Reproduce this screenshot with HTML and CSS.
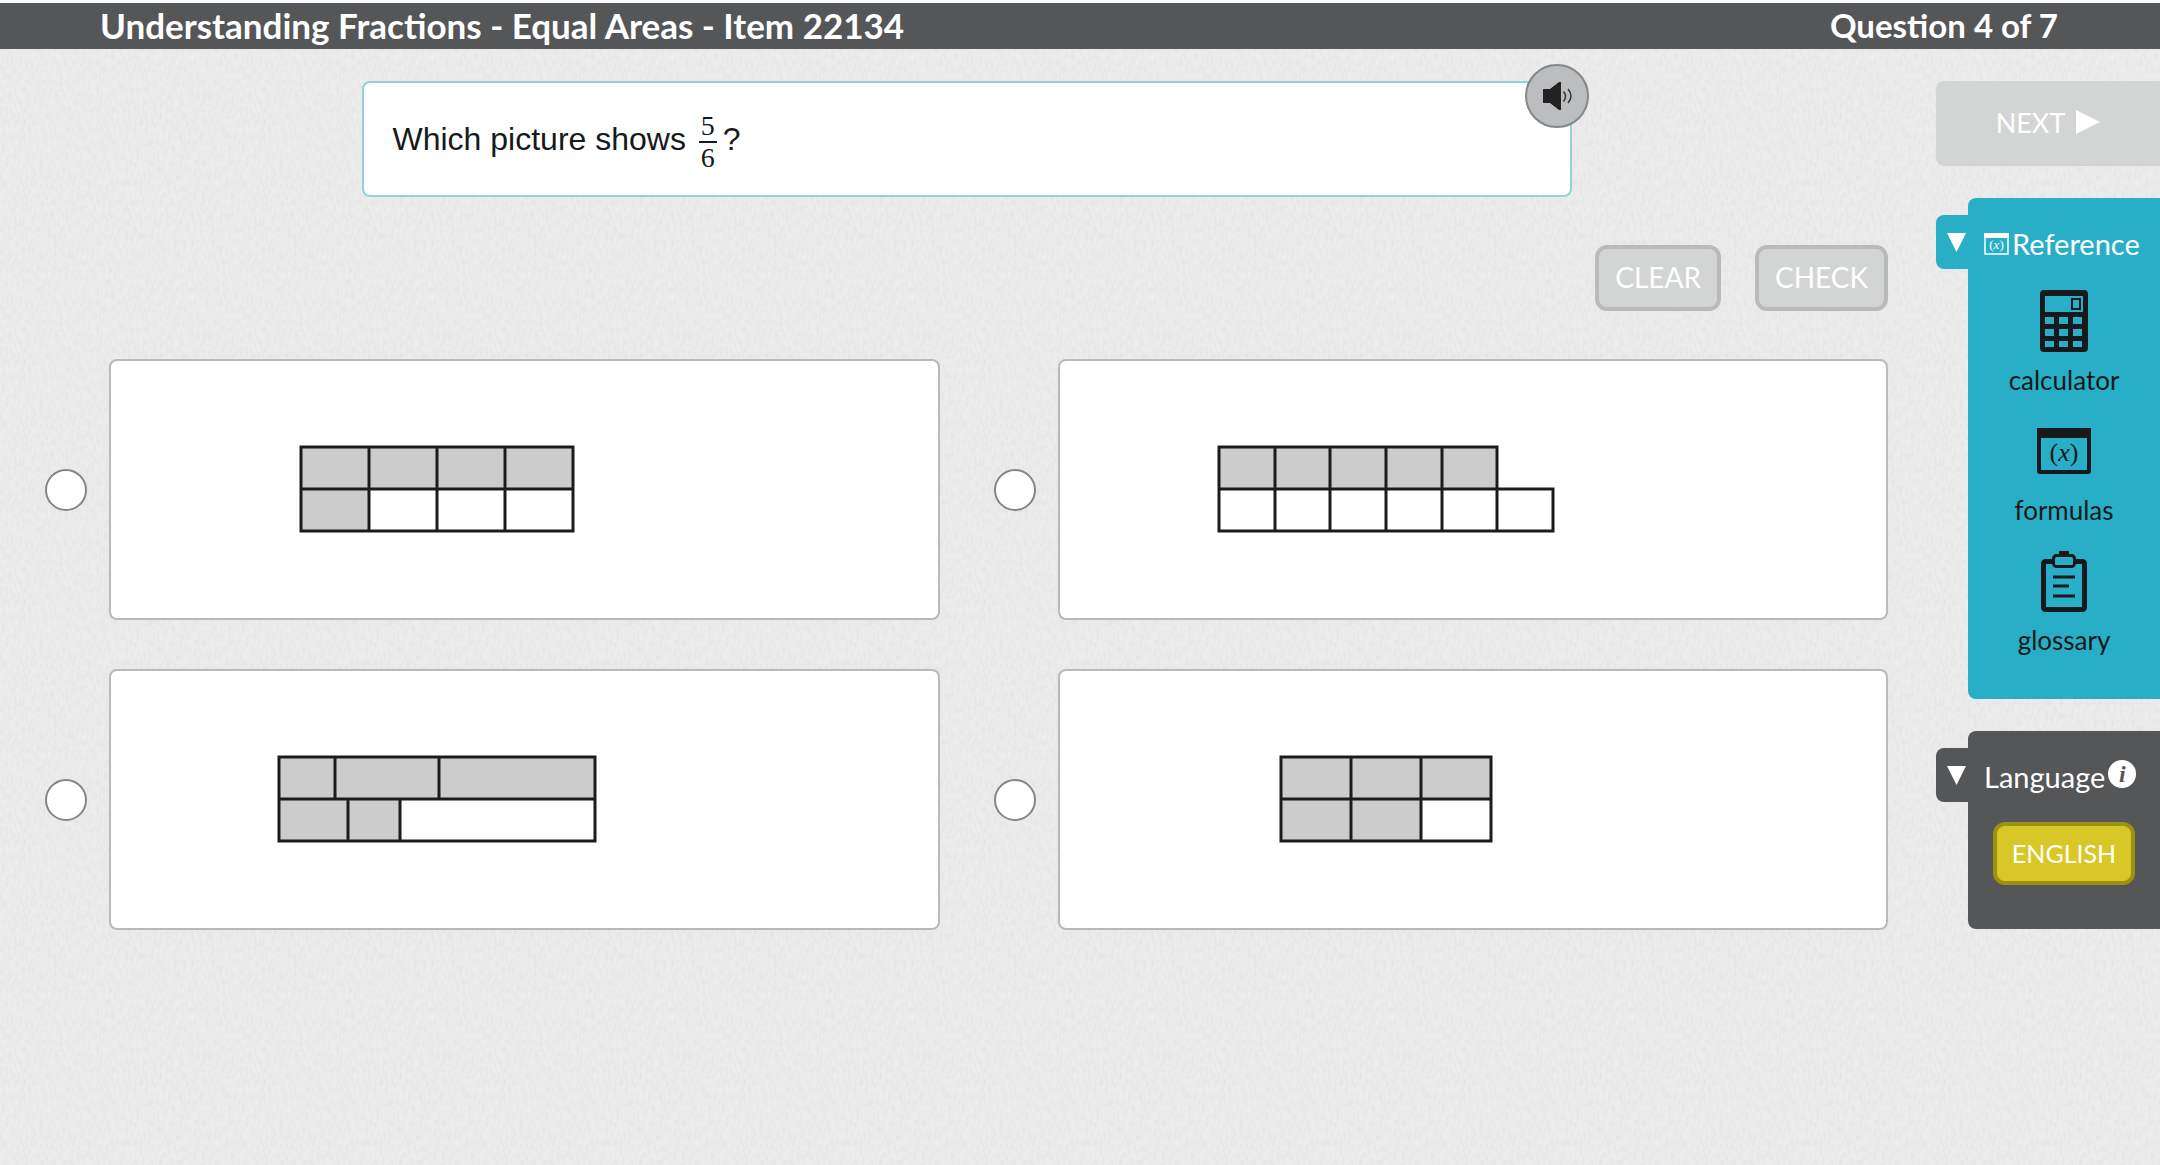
FILE: index.html
```html
<!DOCTYPE html>
<html lang="en">
<head>
<meta charset="utf-8">
<title>Understanding Fractions - Equal Areas</title>
<link rel="stylesheet" href="styles.css">
</head>
<body>

<header class="topbar">
  <h1>Understanding Fractions - Equal Areas - Item 22134</h1>
  <span class="progress">Question 4 of 7</span>
</header>

<div class="layout">

  <main>
    <form id="itemForm">

      <section class="question">
        <p>Which picture shows <span class="fraction"><span class="num">5</span><span class="den">6</span></span>?</p>
        <button type="button" class="audio" aria-label="Read aloud">
          <svg width="30" height="28" viewBox="0 0 30 28">
            <path d="M0 7h7L16 0h2v28h-2L7 21H0z" fill="#222"/>
            <path d="M20.500 9.500q4 4.500 0 10M25 7q6 7 0 14" fill="none" stroke="#333" stroke-width="1.500"/>
          </svg>
        </button>
      </section>

      <div class="actions">
        <button type="reset" class="btn" disabled>CLEAR</button>
        <button type="submit" class="btn" disabled>CHECK</button>
      </div>

      <div class="options">

        <label class="option">
          <input type="radio" name="answer" value="a">
          <span class="card">
            <svg class="figure" width="276" height="88" role="img" aria-label="Two rows of four parts">
              <path class="shaded" d="M2 2H274V44H70V86H2z"/>
              <path class="lines" d="M2 2H274V86H2zM2 44H274M70 2V86M138 2V86M206 2V86"/>
            </svg>
          </span>
        </label>

        <label class="option">
          <input type="radio" name="answer" value="b">
          <span class="card">
            <svg class="figure" width="338" height="88" role="img" aria-label="A row of five parts above a row of six parts">
              <path class="shaded" d="M2 2H280V44H2z"/>
              <path class="lines" d="M2 44V2H280V86M2 44V86H336V44zM58 2V86M113 2V86M169 2V86M225 2V86"/>
            </svg>
          </span>
        </label>

        <label class="option">
          <input type="radio" name="answer" value="c">
          <span class="card">
            <svg class="figure" width="320" height="88" role="img" aria-label="Six parts of different sizes">
              <path class="shaded" d="M2 2H318V44H123V86H2z"/>
              <path class="lines" d="M2 2H318V86H2zM2 44H318M58 2V44M162 2V44M71 44V86M123 44V86"/>
            </svg>
          </span>
        </label>

        <label class="option">
          <input type="radio" name="answer" value="d">
          <span class="card">
            <svg class="figure" width="214" height="88" role="img" aria-label="Two rows of three parts">
              <path class="shaded" d="M2 2H212V44H142V86H2z"/>
              <path class="lines" d="M2 2H212V86H2zM2 44H212M72 2V86M142 2V86"/>
            </svg>
          </span>
        </label>

      </div>
    </form>
  </main>

  <aside class="sidebar">
    <button type="button" class="next" disabled>
      NEXT
      <svg width="24" height="24"><path d="M0 0L24 12L0 24z" fill="#fff"/></svg>
    </button>

    <section class="panel reference">
      <button type="button" class="tab" aria-label="Hide reference">
        <svg width="19" height="19"><path d="M0 0H19L9.500 19z" fill="#fff"/></svg>
      </button>
      <div class="panel-body">
        <h2>
          <svg width="25" height="22" viewBox="0 0 25 22">
            <path d="M1 1H24V21H1z" fill="none" stroke="#fff" stroke-width="1.500"/>
            <path d="M0 0H25V5H0z" fill="#fff"/>
            <text class="fx" x="12.500" y="16" font-size="13" fill="#fff">(<tspan font-style="italic">x</tspan>)</text>
          </svg>
          Reference
        </h2>
        <a class="tool" href="#calculator">
          <span class="tool-icon">
            <svg width="48" height="62" viewBox="0 0 48 62">
              <path fill="#161a1c" fill-rule="evenodd" d="M4 0H44Q48 0 48 4V58Q48 62 44 62H4Q0 62 0 58V4Q0 0 4 0zM5 6V22H43V6zM5 27V34H14V27zM19 27V34H28V27zM33 27V34H42V27zM5 39V46H14V39zM19 39V46H28V39zM33 39V46H42V39zM5 51V57H14V51zM19 51V57H28V51zM33 51V57H42V51z"/>
              <path d="M32 9H40V19H32z" fill="none" stroke="#161a1c" stroke-width="2"/>
            </svg>
          </span>
          calculator
        </a>
        <a class="tool" href="#formulas">
          <span class="tool-icon">
            <svg width="54" height="46" viewBox="0 0 54 46">
              <path fill="#161a1c" fill-rule="evenodd" d="M0 0H54V43Q54 46 51 46H3Q0 46 0 43zM4 10V42H50V10z"/>
              <text class="fx" x="27" y="33" font-size="26" fill="#161a1c">(<tspan font-style="italic">x</tspan>)</text>
            </svg>
          </span>
          formulas
        </a>
        <a class="tool" href="#glossary">
          <span class="tool-icon">
            <svg width="46" height="61" viewBox="0 0 46 61">
              <rect x="2.500" y="10.500" width="41" height="48" rx="2" fill="none" stroke="#161a1c" stroke-width="5"/>
              <path d="M18 5V0H28V5z" fill="#161a1c"/>
              <rect x="12.500" y="4.500" width="21" height="11" rx="3" fill="#29aec7" stroke="#161a1c" stroke-width="3"/>
              <path d="M12 26H34M12 35H28M12 45H34" stroke="#161a1c" stroke-width="3"/>
            </svg>
          </span>
          glossary
        </a>
      </div>
    </section>

    <section class="panel language">
      <button type="button" class="tab" aria-label="Hide language">
        <svg width="19" height="19"><path d="M0 0H19L9.500 19z" fill="#fff"/></svg>
      </button>
      <div class="panel-body">
        <h2>Language <span class="info">i</span></h2>
        <button type="button" class="btn-lang">ENGLISH</button>
      </div>
    </section>
  </aside>

</div>

</body>
</html>
```
FILE: styles.css
```css
* {
  box-sizing: border-box;
}

body {
  margin: 0;
  min-height: 100vh;
  border-top: 3px solid #f8f9fd;
  font-family: "Lato", "Open Sans", sans-serif;
  color: #161a1c;
  background-color: #ececec;
  /* woven paper texture */
  background-image: url("data:image/svg+xml,%3Csvg xmlns='http://www.w3.org/2000/svg' width='240' height='240'%3E%3Cfilter id='n' x='0' y='0' width='100%25' height='100%25'%3E%3CfeTurbulence type='fractalNoise' baseFrequency='.35 .15' numOctaves='2' stitchTiles='stitch'/%3E%3CfeColorMatrix values='0 0 0 0 .4 0 0 0 0 .4 0 0 0 0 .4 .25 0 0 0 -.09'/%3E%3C/filter%3E%3Crect width='240' height='240' filter='url(%23n)'/%3E%3C/svg%3E");
}

button {
  font-family: inherit;
  cursor: pointer;
}

svg {
  display: block;
}

.topbar {
  display: flex;
  justify-content: space-between;
  align-items: center;
  height: 46px;
  padding: 0 102px 3px 100px;
  background: #555658;
  color: #fff;
  font-size: 33px;
  font-weight: bold;
}

.topbar h1 {
  margin: 0;
  font-size: 35px;
}

.layout {
  display: grid;
  grid-template-columns: 1fr 224px;
  gap: 48px;
  padding: 32px 0 48px 45px;
}

/* question */

.question {
  position: relative;
  width: 1210px;
  max-width: 100%;
  min-height: 116px;
  margin: 0 auto;
  padding: 5px 29px 0;
  display: flex;
  align-items: center;
  background: #fff;
  border: 2px solid #90d3d8;
  border-radius: 8px;
}

.question p {
  margin: 0;
  font-family: "Liberation Sans", Arial, sans-serif;
  font-size: 32px;
}

.fraction {
  display: inline-flex;
  flex-direction: column;
  vertical-align: middle;
  margin: 0 6px 0 4px;
  font-family: "Liberation Serif", serif;
  font-size: 28px;
  line-height: 30px;
  text-align: center;
}

.num {
  padding: 0 2px;
  border-bottom: 2px solid #161a1c;
}

.audio {
  position: absolute;
  top: -19px;
  right: -19px;
  width: 64px;
  height: 64px;
  padding: 0 0 0 2px;
  display: flex;
  align-items: center;
  justify-content: center;
  background: #bbbdbe;
  border: 2px solid #858688;
  border-radius: 50%;
}

/* buttons */

.actions {
  display: flex;
  justify-content: flex-end;
  gap: 34px;
  margin: 48px 0;
}

.btn {
  height: 66px;
  padding: 0 16px 2px;
  background: #d3d5d4;
  border: 4px solid #bababa;
  border-radius: 12px;
  color: #fff;
  font-size: 28px;
}

/* answers */

.options {
  display: grid;
  grid-template-columns: 1fr 1fr;
  gap: 49px 54px;
}

.option {
  display: flex;
  align-items: center;
  gap: 22px;
}

.option input {
  appearance: none;
  flex: none;
  width: 42px;
  height: 42px;
  margin: 0;
  background: #fff;
  border: 2px solid #858585;
  border-radius: 50%;
}

.option input:checked {
  background: #29aec7;
}

.card {
  flex: 1;
  min-height: 261px;
  padding: 0 174px 2px 0;
  display: flex;
  align-items: center;
  justify-content: center;
  background: #fff;
  border: 2px solid #b9b9b9;
  border-radius: 8px;
}

.shaded {
  fill: #ccc;
}

.lines {
  fill: none;
  stroke: #1c1c1c;
  stroke-width: 3;
}

/* sidebar */

.sidebar {
  display: flex;
  flex-direction: column;
  gap: 32px;
}

.next {
  height: 85px;
  padding: 0 0 3px;
  display: flex;
  align-items: center;
  justify-content: center;
  gap: 11px;
  background: #d3d5d4;
  border: 0;
  border-radius: 8px 0 0 8px;
  color: #fff;
  font-size: 27px;
}

.panel {
  display: flex;
  align-items: flex-start;
}

.tab {
  width: 32px;
  height: 54px;
  margin-top: 17px;
  padding: 0 0 0 11px;
  border: 0;
  border-radius: 8px 0 0 8px;
}

.panel-body {
  flex: 1;
  display: flex;
  flex-direction: column;
  align-items: center;
  border-radius: 8px 0 0 8px;
}

.reference .tab,
.reference .panel-body {
  background: #29aec7;
}

.language .tab,
.language .panel-body {
  background: #555658;
}

.reference .panel-body {
  min-height: 501px;
}

.language .panel-body {
  min-height: 198px;
}

.panel h2 {
  align-self: stretch;
  display: flex;
  align-items: center;
  gap: 3px;
  margin: 28px 0 0;
  padding-left: 16px;
  color: #fff;
  font-size: 29px;
  font-weight: normal;
  line-height: 36px;
}

.fx {
  font-family: "Liberation Serif", serif;
  text-anchor: middle;
}

.tool {
  height: 130px;
  color: #161a1c;
  font-size: 26px;
  line-height: 32px;
  text-align: center;
  text-decoration: none;
}

.reference h2 {
  margin-bottom: 28px;
}

.tool-icon {
  height: 62px;
  margin-bottom: 12px;
  display: flex;
  align-items: center;
  justify-content: center;
}

.info {
  width: 28px;
  height: 28px;
  margin-bottom: 6px;
  background: #fff;
  border-radius: 50%;
  color: #555658;
  font: italic bold 24px/28px "Liberation Serif", serif;
  text-align: center;
}

.btn-lang {
  width: 142px;
  height: 63px;
  margin-top: 27px;
  padding: 0 0 2px;
  background: #d9c727;
  border: 4px solid #9a930f;
  border-radius: 12px;
  color: #fff;
  font-size: 25px;
}
```
